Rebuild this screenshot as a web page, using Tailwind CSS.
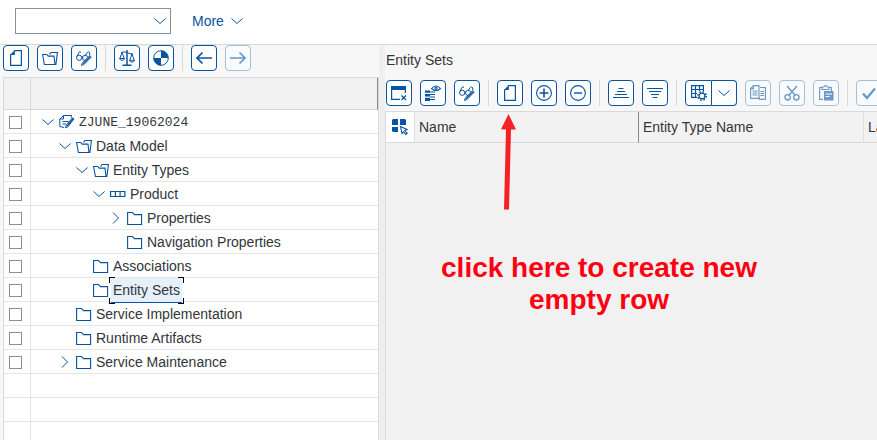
<!DOCTYPE html>
<html lang="en">
<head>
<meta charset="utf-8">
<meta name="viewport" content="width=device-width, initial-scale=1">
<title>Gateway Service Builder</title>
<script src="https://cdn.jsdelivr.net/npm/@tailwindcss/browser@4"></script>
</head>
<body class="bg-white font-['Liberation_Sans',Arial,sans-serif] text-sm text-[#32363a]">

<!-- Shared icon shapes -->
<svg class="hidden" aria-hidden="true">
  <symbol id="down" viewBox="0 0 12 16"><path d="M.5 5.500 6 10.500 11.500 5.500" fill="none" stroke="currentColor"/></symbol>
  <symbol id="right" viewBox="0 0 12 16"><path d="M3 2.500 8.500 8 3 13.500" fill="none" stroke="currentColor"/></symbol>
  <symbol id="doc" viewBox="0 0 16 16"><path d="M6 .6h7.400v14.800H2.600V4.500" fill="none" stroke="currentColor" stroke-width="1.200"/><path d="M2 5 6.800 0v5z" fill="currentColor"/></symbol>
  <symbol id="open" viewBox="0 0 16 16"><path d="M.6 4.500h4.200l1.400 1.600h5.800l1 8.400H2.400zM7.500 4.500l1.400-2h6.500l-1.500 12h-1" fill="none" stroke="currentColor" stroke-width="1.100"/></symbol>
  <symbol id="folder" viewBox="0 0 16 16"><path d="M.6 2.500h4.900l2 2.100h7.100v9.900H.6z" fill="none" stroke="currentColor" stroke-width="1.100"/></symbol>
  <symbol id="glasses" viewBox="0 0 16 16"><g fill="none" stroke="currentColor"><circle cx="3.200" cy="7.800" r="2.600"/><path d="M5.800 7.300q.6-.7 1.200 0M9.200 10.500a2.600 2.600 0 1 1 2.500-3M.9 6.500 3 2.300q.9-1 2 .2M9.500 5 11.500 2.300q.9-1 2 .2l.3 2.500"/><path d="m15.300 7-1.600-1.400-7.300 7.200-1 2.600 2.500-.8z"/><path d="m14.400 6.400-7.200 7.400" stroke-width="1.300"/></g></symbol>
  <symbol id="scale" viewBox="0 0 16 16"><g fill="none" stroke="currentColor"><path d="M8 0v14.500M3.500 15.300h9" stroke-width="1.500"/><path d="M2 2.600q3-1.600 6 0t6 1.200M3 2.500.9 8.500m2.100-6 2.300 6M13 4l-2.200 6M13 4l2.200 6"/><path d="M.5 8.500h5.100q-.3 1.800-2.500 1.800T.5 8.500zM10.400 10.300h5.100q-.3 1.800-2.500 1.800t-2.600-1.800z"/></g></symbol>
  <symbol id="quarters" viewBox="0 0 16 16"><circle cx="8" cy="8" r="7.300" fill="none" stroke="currentColor"/><path d="M8 8V.6A7.400 7.400 0 0 1 15.400 8zM8 8v7.400A7.400 7.400 0 0 1 .6 8z" fill="currentColor"/></symbol>
  <symbol id="back" viewBox="0 0 16 16"><path d="M16 8H1.200M6.500 2.500 1 8l5.500 5.500" fill="none" stroke="currentColor" stroke-width="1.700"/></symbol>
  <symbol id="forward" viewBox="0 0 16 16"><path d="M0 8h14.800M9.500 2.500 15 8l-5.500 5.500" fill="none" stroke="currentColor" stroke-width="1.700"/></symbol>
  <symbol id="docedit" viewBox="0 0 16 16"><g fill="none" stroke="currentColor"><path d="M12.500 3.500v-2H4.500L.8 5v7.500l4.200 1M4.500 1.500V5H.8M3.500 7.500h6M3.500 10h3.500"/><path d="m15 5-1.600-1.200-6 7.200-1 2.800 2.500-1z"/><path d="m14.200 4.500-6 7.300" stroke-width="1.300"/></g></symbol>
  <symbol id="entity" viewBox="0 0 16 16"><path d="M.6 5.500h14.300v5H.6zM5.400 5.500v5M10.100 5.500v5" fill="none" stroke="currentColor" stroke-width="1.200"/></symbol>
  <symbol id="closewin" viewBox="0 0 16 16"><path d="M0 1h15v4H0z" fill="currentColor"/><path d="M.6 4v10.400H9M14.400 4v4M10.500 10.500l4.500 4.500m0-4.500-4.500 4.500" fill="none" stroke="currentColor" stroke-width="1.200"/></symbol>
  <symbol id="inspect" viewBox="0 0 16 16"><path d="M0 5.500h5v2.300H0zM0 9h5v2.600H0zM0 12.800h5V16H0z" fill="currentColor"/><g fill="none" stroke="currentColor" stroke-width="1.100"><path d="M5 7h5M5 9.500h5M5 12h5M5 14.500h5M6.500 3.500q4.500-5 9 0-4.500 4.500-9 0z"/><circle cx="11" cy="3.300" r="1.100"/></g></symbol>
  <symbol id="plus" viewBox="0 0 16 16"><path d="M8 3.500v9M3.500 8h9" stroke="currentColor" stroke-width="1.600"/><circle cx="8" cy="8" r="7.400" fill="none" stroke="currentColor" stroke-width="1.100"/></symbol>
  <symbol id="minus" viewBox="0 0 16 16"><path d="M4 8h8" stroke="currentColor" stroke-width="1.400"/><circle cx="8" cy="8" r="7.400" fill="none" stroke="currentColor" stroke-width="1.100"/></symbol>
  <symbol id="asc" viewBox="0 0 16 16"><path d="M5.500 3.500h5M4 6.500h8M2 9.500h12M0 12.500h16" stroke="currentColor" stroke-width="1.100"/></symbol>
  <symbol id="desc" viewBox="0 0 16 16"><path d="M0 3.500h16M2 6.500h12M4 9.500h8M5.500 12.500h5" stroke="currentColor" stroke-width="1.100"/></symbol>
  <symbol id="gridgear" viewBox="0 0 16 16"><g fill="none" stroke="currentColor" stroke-width="1.200"><path d="M6 12.400H.6V.6h11.800V6M.6 4.500h11.800M.6 8.500H6M4.500.6v11.800M8.500.6V6"/><circle cx="11" cy="11" r="2.900"/></g><circle cx="11" cy="11" r="4.200" fill="none" stroke="currentColor" stroke-width="1.600" stroke-dasharray="1.600 1.700"/></symbol>
  <symbol id="copy" viewBox="0 0 16 16"><g fill="none" stroke="currentColor" stroke-width="1.100"><path d="M10 13.400H.6V3.500L3.500.6H9v12.800M3.500.6v3H.6M2.500 6h5M2.500 8h5M2.500 10h5M10 2.500h5.400v11.900H9M10.500 6.500h3.500M10.500 8.500h3.500M10.500 10.500h3.500"/></g></symbol>
  <symbol id="cut" viewBox="0 0 16 16"><g fill="none" stroke="currentColor" stroke-width="1.300"><path d="m3 1 8.500 9.500M13 1 4.500 10.500"/><circle cx="3.600" cy="12.300" r="2.700"/><circle cx="12.400" cy="12.300" r="2.700"/></g></symbol>
  <symbol id="paste" viewBox="0 0 16 16"><path d="M5 14.400H1.600V2.500H4M11 2.500h2.400V6M4 4.500V2h2q1.500-3 3 0h2v2.500z" fill="none" stroke="currentColor" stroke-width="1.100"/><path d="M6 6h9.500v9.500H6z" fill="currentColor"/><path d="M7.500 9H14M7.500 11.500h4" stroke="#fff"/></symbol>
  <symbol id="check" viewBox="0 0 16 16"><path d="m2 8.500 4 4.500L14 3.500" fill="none" stroke="currentColor" stroke-width="2.200"/></symbol>
  <symbol id="pick" viewBox="0 0 16 16"><path d="M1 0h5v6H0V1zM8 0h5l1 1v5H8zM0 8h6v5H1l-1-1z" fill="currentColor"/><path d="m8.500 7.500 6.500 3-2.300 1 2.500 2.700-1.300 1.200-2.500-2.600-1.400 1.700z" fill="none" stroke="currentColor" stroke-width="1.100"/></symbol>
</svg>

<div class="flex h-screen flex-col overflow-hidden">
  <header class="flex h-[45px] shrink-0 items-start gap-[21px] border-b border-[#d9d9d9] pl-[15px] pt-2">
    <div class="grid items-center">
      <select aria-label="Command" class="col-start-1 row-start-1 h-[26px] w-[156px] appearance-none border border-[#89919a] bg-white px-2"><option></option></select>
      <svg class="pointer-events-none col-start-1 row-start-1 mr-[5px] h-4 w-3 justify-self-end text-[#0854a0]"><use href="#down"/></svg>
    </div>
    <button class="flex h-[26px] items-center gap-[7px] text-[#0854a0]">More <svg class="h-4 w-3"><use href="#down"/></svg></button>
  </header>

  <main class="grid min-h-0 flex-1 grid-cols-[minmax(0,379fr)_6px_minmax(0,492fr)] bg-[#f7f7f7]">
    <section class="flex min-h-0 flex-col overflow-hidden pl-[3px]" aria-label="Project tree">
      <div class="mb-[6px] flex shrink-0 gap-2 text-[#0854a0]" role="toolbar" aria-label="Project">
        <button aria-label="New" class="grid size-[26px] shrink-0 place-items-center rounded border border-current bg-white"><svg class="size-4"><use href="#doc"/></svg></button>
        <button aria-label="Open" class="grid size-[26px] shrink-0 place-items-center rounded border border-current bg-white"><svg class="size-4"><use href="#open"/></svg></button>
        <button aria-label="Display or change" class="grid size-[26px] shrink-0 place-items-center rounded border border-current bg-white"><svg class="size-4"><use href="#glasses"/></svg></button>
        <span class="w-px bg-[#d9d9d9]"></span>
        <button aria-label="Check consistency" class="grid size-[26px] shrink-0 place-items-center rounded border border-current bg-white"><svg class="size-4"><use href="#scale"/></svg></button>
        <button aria-label="Generate" class="grid size-[26px] shrink-0 place-items-center rounded border border-current bg-white"><svg class="size-4"><use href="#quarters"/></svg></button>
        <span class="w-px bg-[#d9d9d9]"></span>
        <button aria-label="Back" class="grid size-[26px] shrink-0 place-items-center rounded border border-current bg-white"><svg class="size-4"><use href="#back"/></svg></button>
        <button aria-label="Forward" disabled class="grid size-[26px] shrink-0 place-items-center rounded border border-[#a3bfdb] bg-[#f9fafb] text-[#6b98c6]"><svg class="size-4"><use href="#forward"/></svg></button>
      </div>
      <div class="min-h-0 flex-1 overflow-hidden border-x border-t border-[#d9d9d9] bg-white">
        <table class="w-full table-fixed border-separate border-spacing-0">
          <colgroup><col class="w-[27px]"><col></colgroup>
          <thead>
            <tr class="h-8 bg-[#f2f2f2]">
              <th class="border-b border-r border-[#d9d9d9]" aria-label="Selection"></th>
              <th class="border-b border-r border-b-[#d9d9d9] border-r-[#888]" aria-label="Object"></th>
            </tr>
          </thead>
          <tbody class="[&_td]:h-6 [&_td]:border-b [&_td]:border-[#e5e5e5] [&_td]:p-0 [&_td]:pt-px [&_td:first-child]:border-r [&_input]:ml-[5px] [&_input]:block [&_input]:size-[13px] [&_input]:appearance-none [&_input]:border [&_input]:border-[#89919a] [&_div]:flex [&_div]:items-center [&_svg]:shrink-0 [&_svg]:text-[#0854a0]">
            <tr><td><input type="checkbox" aria-label="ZJUNE_19062024"></td><td><div class="pl-[11px]"><svg class="mr-[5px] h-4 w-3"><use href="#down"/></svg><svg class="mr-1 size-4"><use href="#docedit"/></svg><span class="pt-[2px] font-['Liberation_Mono',monospace] text-[13px]">ZJUNE_19062024</span></div></td></tr>
            <tr><td><input type="checkbox" aria-label="Data Model"></td><td><div class="pl-[28px]"><svg class="mr-[5px] h-4 w-3"><use href="#down"/></svg><svg class="mr-1 size-4"><use href="#open"/></svg>Data Model</div></td></tr>
            <tr><td><input type="checkbox" aria-label="Entity Types"></td><td><div class="pl-[45px]"><svg class="mr-[5px] h-4 w-3"><use href="#down"/></svg><svg class="mr-1 size-4"><use href="#open"/></svg>Entity Types</div></td></tr>
            <tr><td><input type="checkbox" aria-label="Product"></td><td><div class="pl-[62px]"><svg class="mr-[5px] h-4 w-3"><use href="#down"/></svg><svg class="mr-1 size-4"><use href="#entity"/></svg>Product</div></td></tr>
            <tr><td><input type="checkbox" aria-label="Properties"></td><td><div class="pl-[79px]"><svg class="mr-[5px] h-4 w-3"><use href="#right"/></svg><svg class="mr-1 size-4"><use href="#folder"/></svg>Properties</div></td></tr>
            <tr><td><input type="checkbox" aria-label="Navigation Properties"></td><td><div class="pl-[96px]"><svg class="mr-1 size-4"><use href="#folder"/></svg>Navigation Properties</div></td></tr>
            <tr><td><input type="checkbox" aria-label="Associations"></td><td><div class="pl-[62px]"><svg class="mr-1 size-4"><use href="#folder"/></svg>Associations</div></td></tr>
            <tr><td><input type="checkbox" aria-label="Entity Sets"></td><td><div class="pl-[62px]"><svg class="size-4"><use href="#folder"/></svg><span class="relative -my-[2px] mx-[2px] border-b border-[#0854a0] bg-[#e5f0fa] px-[2px] py-[2px]">Entity Sets<i class="absolute -left-[2px] -top-px size-[6px] border-l border-t border-black"></i><i class="absolute -right-[2px] -top-px size-[6px] border-r border-t border-black"></i><i class="absolute -bottom-[2px] -left-[2px] size-[6px] border-b border-l border-black"></i><i class="absolute -bottom-[2px] -right-[2px] size-[6px] border-b border-r border-black"></i></span></div></td></tr>
            <tr><td><input type="checkbox" aria-label="Service Implementation"></td><td><div class="pl-[45px]"><svg class="mr-1 size-4"><use href="#folder"/></svg>Service Implementation</div></td></tr>
            <tr><td><input type="checkbox" aria-label="Runtime Artifacts"></td><td><div class="pl-[45px]"><svg class="mr-1 size-4"><use href="#folder"/></svg>Runtime Artifacts</div></td></tr>
            <tr><td><input type="checkbox" aria-label="Service Maintenance"></td><td><div class="pl-[28px]"><svg class="mr-[5px] h-4 w-3"><use href="#right"/></svg><svg class="mr-1 size-4"><use href="#folder"/></svg>Service Maintenance</div></td></tr>
            <tr><td></td><td></td></tr>
            <tr><td></td><td></td></tr>
            <tr><td></td><td></td></tr>
          </tbody>
        </table>
      </div>
    </section>

    <div class="bg-[#edeff0]" role="separator"></div>

    <section class="relative flex min-h-0 flex-col overflow-hidden" aria-labelledby="sets-title">
      <h2 id="sets-title" class="shrink-0 pb-[10px] pl-px pt-[5px] leading-5">Entity Sets</h2>
      <div class="mb-[5px] flex shrink-0 gap-2 overflow-hidden pl-px text-[#0854a0]" role="toolbar" aria-label="Entity sets">
        <button aria-label="Close" class="grid size-[26px] shrink-0 place-items-center rounded border border-current bg-white"><svg class="size-4"><use href="#closewin"/></svg></button>
        <button aria-label="Details" class="grid size-[26px] shrink-0 place-items-center rounded border border-current bg-white"><svg class="size-4"><use href="#inspect"/></svg></button>
        <button aria-label="Display or change" class="grid size-[26px] shrink-0 place-items-center rounded border border-current bg-white"><svg class="size-4"><use href="#glasses"/></svg></button>
        <span class="w-px shrink-0 bg-[#d9d9d9]"></span>
        <button aria-label="Create" class="grid size-[26px] shrink-0 place-items-center rounded border border-current bg-white"><svg class="size-4"><use href="#doc"/></svg></button>
        <button aria-label="Insert row" class="grid size-[26px] shrink-0 place-items-center rounded border border-current bg-white"><svg class="size-4"><use href="#plus"/></svg></button>
        <button aria-label="Delete row" class="grid size-[26px] shrink-0 place-items-center rounded border border-current bg-white"><svg class="size-4"><use href="#minus"/></svg></button>
        <span class="w-px shrink-0 bg-[#d9d9d9]"></span>
        <button aria-label="Sort ascending" class="grid size-[26px] shrink-0 place-items-center rounded border border-current bg-white"><svg class="size-4"><use href="#asc"/></svg></button>
        <button aria-label="Sort descending" class="grid size-[26px] shrink-0 place-items-center rounded border border-current bg-white"><svg class="size-4"><use href="#desc"/></svg></button>
        <span class="w-px shrink-0 bg-[#d9d9d9]"></span>
        <div class="flex shrink-0">
          <button aria-label="Table settings" class="grid h-[26px] w-[27px] place-items-center rounded-l border border-current bg-white"><svg class="size-4"><use href="#gridgear"/></svg></button>
          <button aria-label="More table settings" class="grid h-[26px] w-[25px] place-items-center rounded-r border border-l-0 border-current bg-white"><svg class="h-4 w-3"><use href="#down"/></svg></button>
        </div>
        <button aria-label="Copy" disabled class="grid size-[26px] shrink-0 place-items-center rounded border border-[#a3bfdb] bg-[#f9fafb] text-[#6b98c6]"><svg class="size-4"><use href="#copy"/></svg></button>
        <button aria-label="Cut" disabled class="grid size-[26px] shrink-0 place-items-center rounded border border-[#a3bfdb] bg-[#f9fafb] text-[#6b98c6]"><svg class="size-4"><use href="#cut"/></svg></button>
        <button aria-label="Paste" disabled class="grid size-[26px] shrink-0 place-items-center rounded border border-[#a3bfdb] bg-[#f9fafb] text-[#6b98c6]"><svg class="size-4"><use href="#paste"/></svg></button>
        <span class="w-px shrink-0 bg-[#d9d9d9]"></span>
        <button aria-label="Check" disabled class="grid size-[26px] shrink-0 place-items-center rounded border border-[#a3bfdb] bg-[#f9fafb] text-[#6b98c6]"><svg class="size-4"><use href="#check"/></svg></button>
      </div>
      <div class="min-h-0 flex-1 overflow-hidden border-l border-t border-[#d9d9d9] bg-[#f1f1f1]">
        <table class="w-full table-fixed border-separate border-spacing-0 text-left">
          <colgroup><col class="w-[29px]"><col class="w-[224px]"><col class="w-[225px]"><col></colgroup>
          <thead>
            <tr class="h-[31px] bg-[#f2f2f2] [&>th]:overflow-hidden [&>th]:whitespace-nowrap [&>th]:border-b [&>th]:border-b-[#d9d9d9] [&>th]:p-0 [&>th]:font-normal">
              <th class="border-r border-r-[#e0e0e0] bg-white"><button aria-label="Select all" class="grid w-full place-items-center text-[#0854a0]"><svg class="size-4"><use href="#pick"/></svg></button></th>
              <th class="border-r border-r-[#888]"><span class="pl-1">Name</span></th>
              <th class="border-r border-r-[#e0e0e0]"><span class="pl-1">Entity Type Name</span></th>
              <th><span class="pl-1">Label</span></th>
            </tr>
          </thead>
        </table>
      </div>

      <!-- Tutorial callout over the empty grid -->
      <svg class="absolute left-[115px] top-[69px] h-24 w-4" viewBox="0 0 16 96" aria-hidden="true"><path d="M8.500 0 16 15.500l-5-.1L9 95.500l-5-.1L6 15.400l-5-.1z" fill="#f52127"/></svg>
      <p class="absolute left-[54px] top-[207px] w-[320px] text-center text-[28px] font-bold leading-8 text-[#ff0012]">click here to create new empty row</p>
    </section>
  </main>
</div>
</body>
</html>
